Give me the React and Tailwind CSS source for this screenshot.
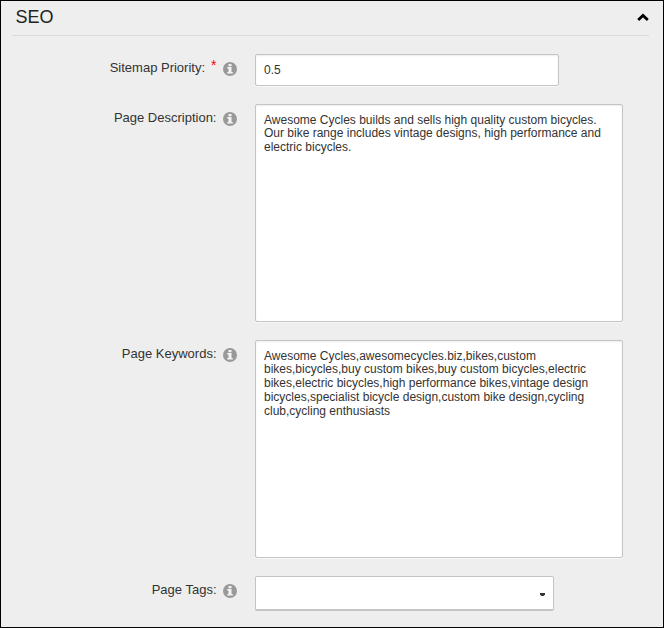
function InfoIcon() {
  return (
    <svg className="mt-[8px] h-[14px] w-[14px] shrink-0" viewBox="0 0 14 14" aria-hidden="true">
      <circle cx="7" cy="7" r="7" fill="#999999" />
      <path d="M5.5 2h3v2.2h-3zM4.2 5h4.3v5h1.3v1.6H4.2V10h1.3V6.5H4.2z" fill="#f3f3f3" />
    </svg>
  );
}

function Row({ label, required, className, children }) {
  return (
    <div className={`flex items-start ${className}`}>
      <div className="flex w-[236px] shrink-0 justify-end whitespace-nowrap text-[13px] leading-[18px] text-[#333]">
        <span className="pt-[5px]">{label}</span>
        {required && <span className="ml-[6px] pt-[2px] text-[14px] text-[#f00]">*</span>}
        <span className="w-[6.5px] shrink-0" />
        <InfoIcon />
      </div>
      <div className="ml-[18px]">{children}</div>
    </div>
  );
}

function TextArea({ lines }) {
  return (
    <div className="h-[218px] w-[368px] rounded-[2px] border border-[#c4c4c4] bg-white px-2 pt-[8.5px] text-[12px] leading-[13.75px] whitespace-nowrap text-[#333] shadow-[0_1px_0_#f8f8f8,inset_0_1px_2px_#eeeeee]">
      {lines.map((line) => (
        <div key={line}>{line}</div>
      ))}
    </div>
  );
}

const description = [
  'Awesome Cycles builds and sells high quality custom bicycles.',
  'Our bike range includes vintage designs, high performance and',
  'electric bicycles.',
];

const keywords = [
  'Awesome Cycles,awesomecycles.biz,bikes,custom',
  'bikes,bicycles,buy custom bikes,buy custom bicycles,electric',
  'bikes,electric bicycles,high performance bikes,vintage design',
  'bicycles,specialist bicycle design,custom bike design,cycling',
  'club,cycling enthusiasts',
];

export default function App() {
  return (
    <div className="h-[628px] w-[664px] overflow-hidden border border-black bg-[#eeeeee] font-['Liberation_Sans',Arial,sans-serif]">
      <header className="mr-[14px] ml-[11px] flex h-[35px] justify-between border-b border-[#dadada]">
        <h2 className="pt-[4px] pl-[3.5px] text-[18px] leading-[24px] text-[#222]">SEO</h2>
        <svg className="mt-[11px] h-[10px] w-[12px]" viewBox="0 0 12 10" aria-hidden="true">
          <path d="M1.2 8L6 3.4l4.8 4.6" fill="none" stroke="#000" strokeWidth="2.8" />
        </svg>
      </header>

      <Row label="Sitemap Priority:" required className="mt-[18px]">
        <div className="flex h-[32px] w-[304px] items-center rounded-[2px] border border-[#c4c4c4] bg-white px-2 text-[12px] text-[#333] shadow-[0_1px_0_#f8f8f8,inset_0_1px_2px_#eeeeee]">
          0.5
        </div>
      </Row>
      <Row label="Page Description:" className="mt-[18px]">
        <TextArea lines={description} />
      </Row>
      <Row label="Page Keywords:" className="mt-[18px]">
        <TextArea lines={keywords} />
      </Row>
      <Row label="Page Tags:" className="mt-[18px]">
        <div className="flex h-[35px] w-[299px] items-center justify-end rounded-[2px] border border-b-2 border-[#c4c4c4] bg-white pr-[8px]">
          <svg className="mt-[3px] h-[3px] w-[5px]" viewBox="0 0 5 3" aria-hidden="true">
            <path d="M0 0h5v1.5L3.5 3h-2L0 1.5z" fill="#333" />
          </svg>
        </div>
      </Row>
    </div>
  );
}
